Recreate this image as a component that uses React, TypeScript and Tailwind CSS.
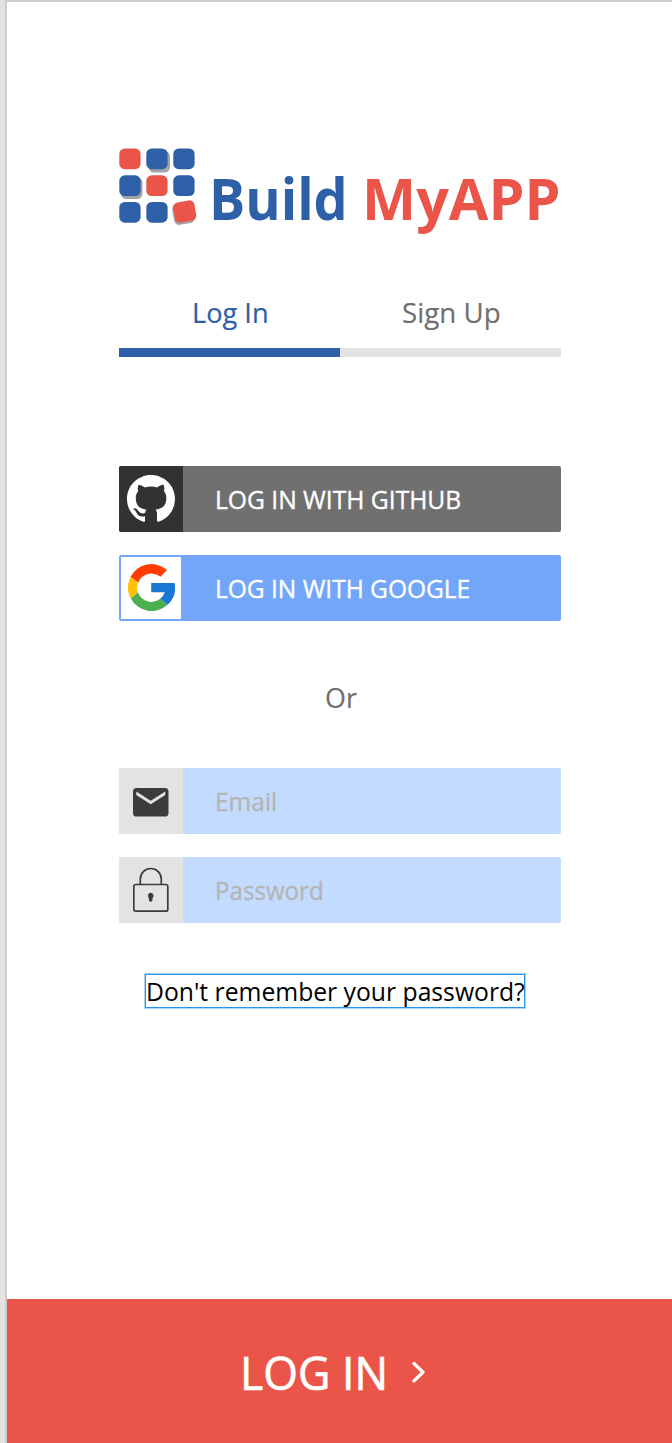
import type { ReactNode } from "react";

function Logo() {
  return (
    <svg width="80" height="80" viewBox="0 0 80 80" className="shrink-0">
      <g fill="#a3a3a3">
        <rect x="29.500" y="3" width="21.500" height="21.500" rx="5.500" />
        <rect x="2" y="29.500" width="21.500" height="21.500" rx="5.500" />
        <rect x="54" y="55" width="21" height="21" rx="5" transform="rotate(-10 64.500 65.500)" />
      </g>
      <g fill="#2e60a8">
        <rect x="27.300" y="0.500" width="21.300" height="20.700" rx="5.500" />
        <rect x="54.300" y="0.500" width="21.300" height="20.700" rx="5.500" />
        <rect x="0.300" y="27.300" width="21.300" height="20.700" rx="5.500" />
        <rect x="54.300" y="27.300" width="21.300" height="20.700" rx="5.500" />
        <rect x="0.300" y="54" width="21.300" height="20.700" rx="5.500" />
        <rect x="27.300" y="54" width="21.300" height="20.700" rx="5.500" />
      </g>
      <g fill="#eb5449">
        <rect x="0.300" y="0.500" width="21.300" height="20.700" rx="5.500" />
        <rect x="27.300" y="27.300" width="21.300" height="20.700" rx="5.500" />
        <rect x="55" y="53.300" width="21.500" height="20.500" rx="5" transform="rotate(-10 65.500 63.500)" />
      </g>
    </svg>
  );
}

function GithubIcon() {
  return (
    <svg width="48" height="48" viewBox="0 0 16 16" fill="#fff">
      <path d="M8 0C3.580 0 0 3.580 0 8c0 3.540 2.290 6.530 5.470 7.590.4.070.55-.17.55-.38 0-.19-.01-.82-.01-1.490-2.010.37-2.530-.49-2.690-.94-.09-.23-.48-.94-.82-1.130-.28-.15-.68-.52-.01-.53.63-.01 1.080.58 1.230.82.72 1.210 1.870.87 2.330.66.07-.52.28-.87.51-1.070-1.780-.2-3.640-.89-3.640-3.950 0-.87.31-1.590.82-2.150-.08-.2-.36-1.020.08-2.120 0 0 .67-.21 2.200.82.64-.18 1.320-.27 2-.27s1.360.09 2 .27c1.530-1.040 2.200-.82 2.200-.82.44 1.100.16 1.920.08 2.120.51.56.82 1.270.82 2.150 0 3.070-1.870 3.750-3.650 3.950.29.25.54.73.54 1.480 0 1.070-.01 1.930-.01 2.200 0 .21.15.46.55.38A8.010 8.010 0 0 0 16 8c0-4.420-3.580-8-8-8Z" />
    </svg>
  );
}

function GoogleIcon() {
  return (
    <svg width="47" height="47" viewBox="0 0 47 47" className="mb-[1px]">
      <path fill="#ff3d00" d="M2.500 13A23.500 23.500 0 0 1 39 6l-6.600 6.800A14.200 14.200 0 0 0 10.200 18.500Z" />
      <path fill="#ffc107" d="M2.500 13a23.500 23.500 0 0 0 .3 21.500L10 28.500a14.200 14.200 0 0 1 .2-10Z" />
      <path fill="#4caf50" d="M2.800 34.500A23.500 23.500 0 0 0 39.500 40.800L32.200 34.800A14.200 14.200 0 0 1 10 28.500Z" />
      <path fill="#1976d2" d="M23.200 19H46.600A23.500 23.500 0 0 1 39.500 40.800L32.200 34.800A14.200 14.200 0 0 0 36.800 28.300H23.200Z" />
    </svg>
  );
}

function MailIcon() {
  return (
    <svg width="36" height="29" viewBox="0 0 36 29" className="mt-[2px]">
      <rect width="35.500" height="28.500" rx="3.600" fill="#3c3c3c" />
      <path d="M3.300 3.600 17.700 12.700 32.300 3.600V7L17.700 16.300 3.300 7Z" fill="#e3e3e3" />
    </svg>
  );
}

function LockIcon() {
  return (
    <svg width="36" height="46" viewBox="0 0 36 46" fill="none" stroke="#3c3c3c" strokeWidth="1.700">
      <rect x="0.800" y="17.500" width="34" height="26.700" rx="2" />
      <path d="M7.300 17.500V12a10.500 10.500 0 0 1 21 0v5.500" />
      <path d="M17.700 25.800a2.900 2.900 0 0 0-1.800 5.100V33a1.800 1.800 0 0 0 3.600 0v-2.100A2.900 2.900 0 0 0 17.700 25.800Z" fill="#3c3c3c" stroke="none" />
    </svg>
  );
}

function Row({ icon, iconClass, className, children }: { icon: ReactNode; iconClass: string; className: string; children: ReactNode }) {
  return (
    <div className={`flex h-[66px] w-[442px] items-center overflow-hidden rounded-[2px] text-[25px] [-webkit-text-stroke:0.35px_currentColor] ${className}`}>
      <div className={`flex shrink-0 items-center justify-center ${iconClass}`}>{icon}</div>
      {children}
    </div>
  );
}

export default function App() {
  return (
    <div className="flex h-[1443px] w-[672px] overflow-hidden bg-[#e3e3e3] font-['Open_Sans',sans-serif] whitespace-nowrap">
      <main className="ml-[5px] flex w-[667px] flex-col border-t-2 border-l-2 border-[#cecece] bg-white">
        <header className="mt-[146px] ml-[112px] flex h-[80px]">
          <Logo />
          <h1 className="flex pt-[20px] text-[58px] leading-[60px] font-bold">
            <span className="ml-[10px] w-[153px] text-[#2e60a8]"><span className="inline-block origin-left scale-x-[0.93]">Build</span></span>
            <span className="text-[#eb5449]"><span className="inline-block origin-left scale-x-[0.99]">MyAPP</span></span>
          </h1>
        </header>

        <nav className="mt-[64px] ml-[112px] flex w-[442px] text-[28px] leading-[40px]">
          <div className="h-[65px] w-[221px] border-b-[9px] border-b-[#2e60a8] pl-[73px] text-[#2e60a8]"><span className="inline-block origin-left scale-x-[0.97] [-webkit-text-stroke:0.2px_currentColor]">Log In</span></div>
          <div className="h-[65px] w-[221px] border-b-[9px] border-b-[#e3e3e3] pl-[62px] text-[#707070]"><span className="inline-block origin-left scale-x-[0.99] [-webkit-text-stroke:0.2px_currentColor]">Sign Up</span></div>
        </nav>

        <section className="mt-[109px] ml-[112px] flex flex-col gap-[23px] text-white">
          <Row icon={<GithubIcon />} iconClass="h-[66px] w-[64px] bg-[#323232]" className="bg-[#707070]">
            <span className="mt-[2px] ml-[32px] inline-block origin-left scale-x-[0.985]">LOG IN WITH GITHUB</span>
          </Row>
          <Row icon={<GoogleIcon />} iconClass="ml-[2px] h-[62px] w-[60px] bg-white" className="bg-[#72a6f9]">
            <span className="mt-[2px] ml-[34px] inline-block origin-left scale-x-[0.98]">LOG IN WITH GOOGLE</span>
          </Row>
        </section>

        <div className="mt-[56px] ml-[318px] text-[28px] leading-[40px] text-[#707070]"><span className="inline-block origin-left scale-x-[0.96] [-webkit-text-stroke:0.2px_currentColor]">Or</span></div>

        <section className="mt-[51px] ml-[112px] flex flex-col gap-[23px] text-[#b5b5b5]">
          <Row icon={<MailIcon />} iconClass="h-[66px] w-[64px] bg-[#e3e3e3]" className="bg-[#c3dbff]">
            <span className="mt-[2px] ml-[32px] inline-block origin-left scale-x-[0.98]">Email</span>
          </Row>
          <Row icon={<LockIcon />} iconClass="h-[66px] w-[64px] bg-[#e3e3e3]" className="bg-[#c3dbff]">
            <span className="mt-[2px] ml-[32px] inline-block origin-left scale-x-[0.965]">Password</span>
          </Row>
        </section>

        <a className="mt-[51px] ml-[138px] h-[34px] w-[380px] border border-solid border-[#2694e8] text-[25px] leading-[32px] text-black ring-1 ring-[#2694e8]/40">
          <span className="inline-block origin-left scale-x-[0.988]">Don't remember your password?</span>
        </a>

        <footer className="mt-auto flex h-[144px] items-center bg-[#eb5449] text-white">
          <div className="mt-[2px] ml-[233px] w-[172px] text-[46px] leading-[60px]"><span className="inline-block origin-left scale-x-[0.97] [-webkit-text-stroke:0.7px_currentColor]">LOG IN</span></div>
          <svg width="14" height="22" viewBox="0 0 14 22" fill="none" stroke="#fff" strokeWidth="3.300" strokeLinecap="round" strokeLinejoin="round" className="mt-[1px]">
            <path d="m2 2.500 9 8.700-9 8.700" />
          </svg>
        </footer>
      </main>
    </div>
  );
}
